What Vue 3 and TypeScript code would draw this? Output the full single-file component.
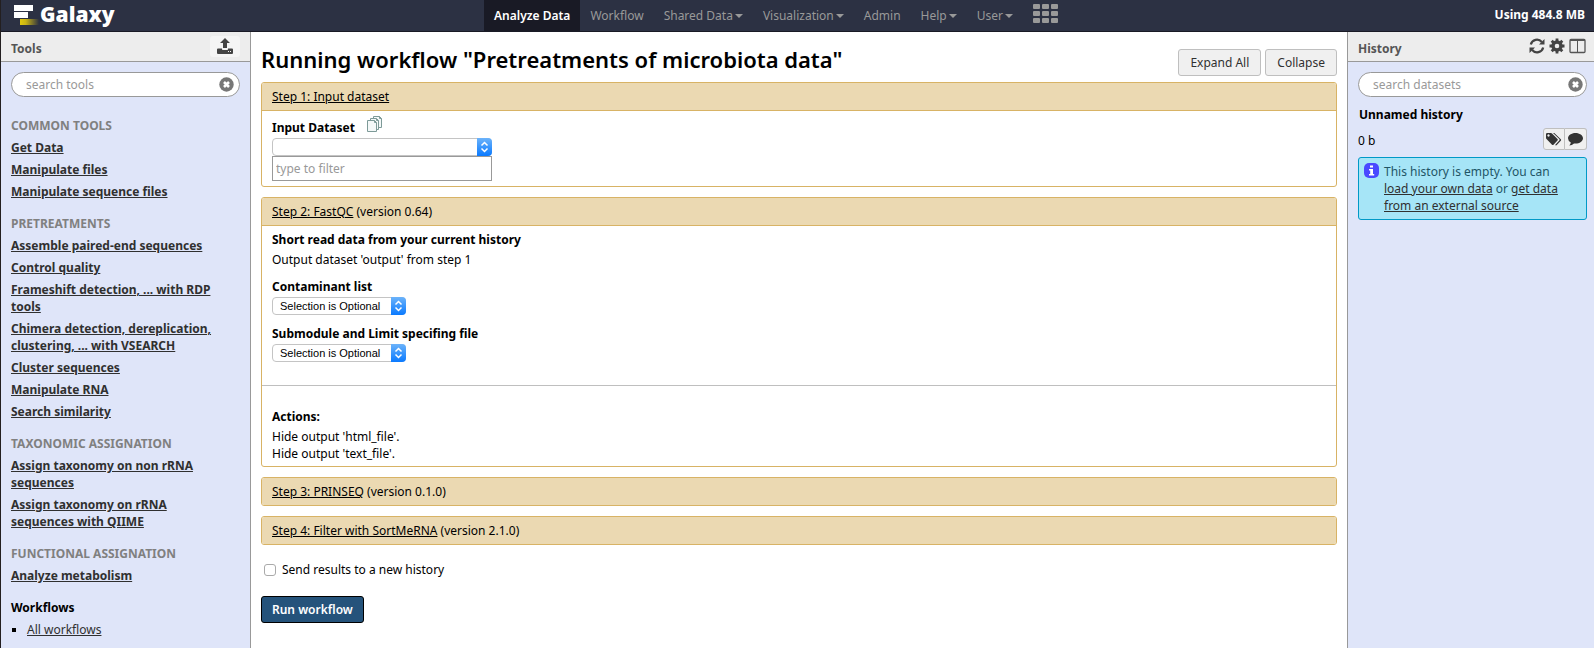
<script setup lang="ts">
import { ref } from 'vue'

interface NavItem {
  label: string
  menu?: boolean
  active?: boolean
}

interface ToolSection {
  title: string
  tools: string[]
}

const navItems: NavItem[] = [
  { label: 'Analyze Data', active: true },
  { label: 'Workflow' },
  { label: 'Shared Data', menu: true },
  { label: 'Visualization', menu: true },
  { label: 'Admin' },
  { label: 'Help', menu: true },
  { label: 'User', menu: true },
]

const sections: ToolSection[] = [
  { title: 'COMMON TOOLS', tools: ['Get Data', 'Manipulate files', 'Manipulate sequence files'] },
  {
    title: 'PRETREATMENTS',
    tools: [
      'Assemble paired-end sequences',
      'Control quality',
      'Frameshift detection, ... with RDP tools',
      'Chimera detection, dereplication, clustering, ... with VSEARCH',
      'Cluster sequences',
      'Manipulate RNA',
      'Search similarity',
    ],
  },
  {
    title: 'TAXONOMIC ASSIGNATION',
    tools: ['Assign taxonomy on non rRNA sequences', 'Assign taxonomy on rRNA sequences with QIIME'],
  },
  { title: 'FUNCTIONAL ASSIGNATION', tools: ['Analyze metabolism'] },
]

const optionalInputs = [
  { id: 'contaminants', label: 'Contaminant list' },
  { id: 'limits', label: 'Submodule and Limit specifing file' },
]

const toolQuery = ref('')
const datasetQuery = ref('')
const filter = ref('')
const newHistory = ref(false)
</script>

<template>
  <div class="app">
    <header class="masthead">
      <a class="brand" href="#">
        <svg width="26" height="21" viewBox="0 0 26 21" aria-hidden="true">
          <defs>
            <linearGradient id="tail" x1="0" x2="1" y1="0" y2="0">
              <stop offset="0" stop-color="#e0c80c" />
              <stop offset="0.3" stop-color="#c9b414" />
              <stop offset="1" stop-color="#2c3143" />
            </linearGradient>
          </defs>
          <rect x="0" y="1" width="19" height="6" fill="#fff" />
          <rect x="0" y="8" width="14" height="6" fill="#fff" />
          <rect x="6" y="15" width="19" height="6" fill="url(#tail)" />
        </svg>
        <span>Galaxy</span>
      </a>
      <nav class="nav">
        <a v-for="item in navItems" :key="item.label" href="#" :class="{ active: item.active }">
          {{ item.label }}<i v-if="item.menu" class="caret"></i>
        </a>
        <a class="grid-link" href="#" aria-label="Scratchbook">
          <svg width="25" height="20" viewBox="0 0 25 20" fill="#999" aria-hidden="true">
            <template v-for="row in 3" :key="row">
              <rect v-for="col in 3" :key="col" :x="(col - 1) * 9" :y="(row - 1) * 7" width="7" height="5" rx="1" />
            </template>
          </svg>
        </a>
      </nav>
      <div class="usage">Using 484.8 MB</div>
    </header>

    <div class="columns">
      <aside class="side tools">
        <div class="side-head">
          <h2>Tools</h2>
          <button class="upload" type="button" aria-label="Upload files">
            <svg width="16" height="16" viewBox="0 0 16 16" fill="#444" aria-hidden="true">
              <path d="M8 0l5 5H10v5H6V5H3z" />
              <path d="M1 10.500h4v.7q0 .8.800.8h4.400q.8 0 .8-.8v-.7h4q1 0 1 1V15q0 1-1 1H1q-1 0-1-1v-3.500q0-1 1-1zM11 13v1h1v-1zM13 13v1h1v-1z" fill-rule="evenodd" />
            </svg>
          </button>
        </div>
        <div class="side-body">
          <div class="search">
            <input v-model="toolQuery" type="text" placeholder="search tools" aria-label="search tools" />
            <button type="button" aria-label="Clear tool search" @click="toolQuery = ''">
              <svg width="15" height="15" viewBox="0 0 15 15" aria-hidden="true">
                <circle cx="7.500" cy="7.500" r="7.200" fill="#777" />
                <path d="M5 5l5 5M10 5l-5 5" stroke="#fff" stroke-width="2.600" />
              </svg>
            </button>
          </div>
          <section v-for="section in sections" :key="section.title" class="tool-section">
            <h3>{{ section.title }}</h3>
            <a v-for="tool in section.tools" :key="tool" href="#">{{ tool }}</a>
          </section>
          <section class="workflows">
            <h3>Workflows</h3>
            <ul>
              <li><a href="#">All workflows</a></li>
            </ul>
          </section>
        </div>
      </aside>

      <main class="center">
        <div class="title-row">
          <h1>Running workflow "Pretreatments of microbiota data"</h1>
          <div class="title-actions">
            <button class="btn" type="button">Expand All</button>
            <button class="btn" type="button">Collapse</button>
          </div>
        </div>

        <section class="step">
          <div class="step-head"><a href="#">Step 1: Input dataset</a></div>
          <div class="step-body input-step">
            <div class="dataset-label">
              <label for="dataset">Input Dataset</label>
              <svg width="16" height="16" viewBox="0 0 16 16" fill="#f4f8f8" stroke="#7d9a98" aria-hidden="true">
                <path d="M6.500.500h6l2 2v9h-8z" />
                <path d="M3.500 2.500h6l2 2v9h-8z" />
                <path d="M.500 4.500h7l2 2v9h-9z" />
                <path d="M7.500 4.500v2h2M9.500 2.500v2h2M12.500.500v2h2" fill="none" />
              </svg>
            </div>
            <div class="picker wide">
              <select id="dataset"><option></option></select>
              <svg width="15" height="18" viewBox="0 0 15 18" aria-hidden="true">
                <path d="M4.500 7.500l3-3 3 3M4.500 10.500l3 3 3-3" fill="none" stroke="#fff" stroke-width="1.500" />
              </svg>
            </div>
            <input v-model="filter" class="filter" type="text" placeholder="type to filter" aria-label="type to filter" />
          </div>
        </section>

        <section class="step">
          <div class="step-head"><a href="#">Step 2: FastQC</a> (version 0.64)</div>
          <div class="step-body">
            <div class="field">
              <b>Short read data from your current history</b>
              <p>Output dataset 'output' from step 1</p>
            </div>
            <div v-for="input in optionalInputs" :key="input.id" class="field">
              <label :for="input.id">{{ input.label }}</label>
              <div class="picker">
                <select :id="input.id"><option>Selection is Optional</option></select>
                <svg width="15" height="18" viewBox="0 0 15 18" aria-hidden="true">
                  <path d="M4.500 7.500l3-3 3 3M4.500 10.500l3 3 3-3" fill="none" stroke="#fff" stroke-width="1.500" />
                </svg>
              </div>
            </div>
          </div>
          <div class="actions">
            <b>Actions:</b>
            <div>Hide output 'html_file'.</div>
            <div>Hide output 'text_file'.</div>
          </div>
        </section>

        <section class="step">
          <div class="step-head"><a href="#">Step 3: PRINSEQ</a> (version 0.1.0)</div>
        </section>
        <section class="step">
          <div class="step-head"><a href="#">Step 4: Filter with SortMeRNA</a> (version 2.1.0)</div>
        </section>

        <label class="send"><input v-model="newHistory" type="checkbox" />Send results to a new history</label>
        <button class="run" type="button">Run workflow</button>
      </main>

      <aside class="side history">
        <div class="side-head">
          <h2>History</h2>
          <div class="head-icons">
            <button type="button" aria-label="Refresh history">
              <svg width="16" height="16" viewBox="0 0 16 16" aria-hidden="true">
                <path d="M1.800 6.500A6.300 6.300 0 0 1 12.800 4M14.200 9.500A6.300 6.300 0 0 1 3.200 12" fill="none" stroke="#444" stroke-width="2.200" />
                <path d="M15.500 1v5.500H10zM.500 15V9.500H6z" fill="#444" />
              </svg>
            </button>
            <button type="button" aria-label="History options">
              <svg width="16" height="16" viewBox="0 0 16 16" aria-hidden="true">
                <circle cx="8" cy="8" r="4" fill="none" stroke="#444" stroke-width="3.400" />
                <path d="M8 .500v3M8 12.500v3M.500 8h3M12.500 8h3M2.700 2.700l2 2M11.300 11.300l2 2M2.700 13.300l2-2M11.300 4.700l2-2" stroke="#444" stroke-width="2.800" />
              </svg>
            </button>
            <button type="button" aria-label="View all histories">
              <svg width="17" height="16" viewBox="0 0 17 16" fill="none" stroke="#555" aria-hidden="true">
                <rect x="1" y="1.500" width="15" height="13" rx="1" stroke-width="1.300" />
                <path d="M1 2h15" stroke-width="2" />
                <path d="M8.500 2v13" />
              </svg>
            </button>
          </div>
        </div>
        <div class="side-body">
          <div class="search">
            <input v-model="datasetQuery" type="text" placeholder="search datasets" aria-label="search datasets" />
            <button type="button" aria-label="Clear dataset search" @click="datasetQuery = ''">
              <svg width="15" height="15" viewBox="0 0 15 15" aria-hidden="true">
                <circle cx="7.500" cy="7.500" r="7.200" fill="#777" />
                <path d="M5 5l5 5M10 5l-5 5" stroke="#fff" stroke-width="2.600" />
              </svg>
            </button>
          </div>
          <h3 class="history-name">Unnamed history</h3>
          <div class="history-size">
            <span>0 b</span>
            <div class="pair">
              <button type="button" aria-label="Edit history tags">
                <svg width="16" height="13" viewBox="0 0 16 13" fill="#333" aria-hidden="true">
                  <path d="M0 1.200Q0 0 1.200 0H5l1 .5 5.500 5.500q.7.700 0 1.500l-4 4.200q-.7.700-1.500 0L.5 6Q0 5.500 0 4.500zM2.500 1.300a1.200 1.200 0 1 0 .01 0z" fill-rule="evenodd" />
                  <path d="M7 0h1.300l6.500 6.200q.8.800 0 1.500l-4 4.300q-.8.800-1.700 0l4.200-4.600q.6-.7 0-1.400z" />
                </svg>
              </button>
              <button type="button" aria-label="Edit history annotation">
                <svg width="15" height="13" viewBox="0 0 15 13" fill="#333" aria-hidden="true">
                  <path d="M7.500 0C11.600 0 15 2.300 15 5.200s-3.400 5.300-7.500 5.300l-1.500-.1Q4 12.300 1.300 12.500q1.400-1.300 1.500-3Q0 7.700 0 5.200C0 2.300 3.400 0 7.500 0z" />
                </svg>
              </button>
            </div>
          </div>
          <div class="info">
            <svg width="15" height="15" viewBox="0 0 15 15" aria-hidden="true">
              <rect width="15" height="15" rx="5" fill="#4a48ff" />
              <path d="M6 2.500h3v2H6zM5 6h4v5h1.200v1.500H5V11h1.200V7.500H5z" fill="#fff" />
            </svg>
            <p>This history is empty. You can <a href="#">load your own data</a> or <a href="#">get data from an external source</a></p>
          </div>
        </div>
      </aside>
    </div>
  </div>
</template>

<style>
body {
  margin: 0;
  background: #fff;
}
</style>

<style scoped>
* {
  box-sizing: border-box;
}

.app {
  display: flex;
  flex-direction: column;
  height: 100vh;
  overflow: hidden;
  border-left: 1px solid #231f20;
  color: #000;
  font-family: "Noto Sans", "Open Sans", sans-serif;
  font-size: 12px;
  line-height: 17px;
}

h1, h2, h3, p, ul {
  margin: 0;
}

button, input, select {
  font: inherit;
  margin: 0;
}

button {
  cursor: pointer;
}

svg {
  display: block;
  flex: none;
}

.masthead {
  display: flex;
  flex: none;
  height: 32px;
  background: #2c3143;
  border-bottom: 1px solid #191a25;
}

.brand {
  flex: 10 1 0;
  display: flex;
  align-items: center;
  padding: 0 0 3px 13px;
  color: #fff;
  font-family: "Open Sans", sans-serif;
  font-size: 21px;
  font-weight: 800;
  line-height: 28px;
  text-decoration: none;
}

.nav {
  display: flex;
}

.nav a {
  display: flex;
  align-items: center;
  padding: 0 10px 1px;
  color: #999;
  text-decoration: none;
}

.nav .active {
  background: #191a25;
  color: #fff;
  font-weight: 600;
}

.nav .grid-link {
  padding-bottom: 4px;
}

.caret {
  margin: 2px 0 0 2px;
  border: 4px solid transparent;
  border-top-color: #999;
  border-bottom: 0;
}

.usage {
  flex: 11 1 0;
  padding: 6px 9px 0 0;
  color: #fff;
  font-weight: 700;
  text-align: right;
}

.columns {
  display: flex;
  flex: 1;
  min-height: 0;
}

.side {
  flex: none;
  background: #dfe5f9;
}

.tools {
  width: 250px;
  border-right: 1px solid #999;
}

.history {
  width: 247px;
  border-left: 1px solid #999;
}

.side-head {
  display: flex;
  align-items: center;
  justify-content: space-between;
  height: 30px;
  padding: 0 10px;
  background: #ededed;
  border-bottom: 1px solid #999;
}

.history .side-head {
  padding-right: 8px;
}

.side-head h2 {
  padding-top: 4px;
  color: #555;
  font-size: 12px;
  font-weight: 700;
  line-height: 17px;
}

.upload {
  display: flex;
  justify-content: center;
  width: 30px;
  height: 21px;
  padding: 2px 0;
  background: #f5f5f5;
  border: 0;
  border-radius: 3px;
}

.head-icons {
  display: flex;
  gap: 4px;
  padding-bottom: 2px;
}

.head-icons button {
  padding: 0;
  background: none;
  border: 0;
}

.side-body {
  padding: 10px;
}

.history .side-body {
  padding-right: 7px;
}

.search {
  display: flex;
  align-items: center;
  height: 25px;
  padding: 0 5px 0 14px;
  background: #fff;
  border: 1px solid #999;
  border-radius: 13px;
}

.history .search {
  padding-right: 3px;
}

.search input {
  flex: 1;
  min-width: 0;
  padding: 0;
  background: none;
  border: 0;
  outline: 0;
}

.search button {
  padding: 0;
  background: none;
  border: 0;
}

input::placeholder {
  color: #999;
  opacity: 1;
}

.tool-section {
  display: flex;
  flex-direction: column;
  align-items: flex-start;
  gap: 5px;
  padding: 0 15px 15px 0;
}

.search + .tool-section {
  padding-top: 20px;
}

.tool-section h3 {
  color: #808080;
  font-size: 12px;
  font-weight: 700;
  line-height: 17px;
}

.tool-section a {
  color: #303030;
  font-weight: 700;
}

.workflows h3 {
  font-size: 12px;
  line-height: 17px;
}

.workflows ul {
  padding: 5px 0 0 16px;
  list-style: square;
}

.workflows a {
  color: #303030;
}

.center {
  flex: 1;
  min-width: 0;
  padding: 17px 10px 0;
}

.title-row {
  display: flex;
  justify-content: space-between;
  height: 33px;
}

.title-row h1 {
  font-size: 22px;
  font-weight: 600;
  line-height: 20px;
}

.title-actions {
  display: flex;
  gap: 4px;
}

.btn {
  height: 27px;
  padding: 0 11px;
  background: #f0f0f0;
  border: 1px solid #bfbfbf;
  border-radius: 3px;
  color: #303030;
}

.step {
  margin-bottom: 10px;
  border: 1px solid #d8b365;
  border-radius: 3px;
}

.step-head {
  padding: 5px 10px;
  background: #ebd9b2;
  border-radius: 2px;
}

.step-head a {
  color: #000;
}

.step-head:not(:last-child) {
  border-bottom: 1px solid #d8b365;
  border-radius: 2px 2px 0 0;
}

.step-body {
  padding: 5px 10px 13px;
}

.input-step {
  padding-bottom: 5px;
}

.step label, .step b {
  font-weight: 700;
}

.dataset-label {
  display: flex;
  gap: 12px;
  align-items: flex-start;
  height: 22px;
}

.dataset-label label {
  padding-top: 3px;
}

.field {
  display: flex;
  flex-direction: column;
  align-items: flex-start;
  gap: 2px;
  padding-bottom: 10px;
}

.field p {
  padding-top: 1px;
}

.picker {
  display: grid;
  grid-template-areas: "box";
  align-items: center;
  width: 134px;
}

.picker.wide {
  width: 220px;
}

.picker select {
  grid-area: box;
  width: 100%;
  height: 18px;
  padding: 0 20px 0 7px;
  appearance: none;
  background: #fff;
  border: 1px solid #c4c4c4;
  border-radius: 4px;
  color: #000;
  font-family: "Liberation Sans", Arial, sans-serif;
  font-size: 11px;
  line-height: 14px;
}

.picker svg {
  grid-area: box;
  justify-self: end;
  background: linear-gradient(#6cb3fa, #0a7aff);
  border-radius: 0 4px 4px 0;
  pointer-events: none;
}

.filter {
  display: block;
  width: 220px;
  height: 25px;
  padding: 0 3px;
  background: #fff;
  border: 1px solid #999;
}

.actions {
  padding: 22px 10px 4px;
  border-top: 1px solid #bfbfbf;
}

.actions b {
  display: block;
  padding-bottom: 3px;
}

.send {
  display: flex;
  align-items: center;
  gap: 6px;
  margin: 16px 0 18px;
  padding-left: 3px;
}

.send input {
  width: 12px;
  height: 12px;
  appearance: none;
  background: #fff;
  border: 1px solid #aaa;
  border-radius: 3px;
}

.send input:checked {
  background: #0a7aff;
}

.run {
  height: 27px;
  padding: 0 10px;
  background: #25537b;
  border: 1px solid #000;
  border-radius: 3px;
  color: #fff;
  font-weight: 600;
}

.history-name {
  padding: 9px 1px 0;
  font-size: 12px;
  line-height: 17px;
}

.history-size {
  display: flex;
  align-items: center;
  justify-content: space-between;
  padding: 5px 0 7px;
}

.history-size span {
  padding-top: 2px;
}

.pair {
  display: flex;
}

.pair button {
  display: flex;
  align-items: center;
  justify-content: center;
  width: 22px;
  height: 22px;
  padding: 0;
  background: #f0f0f0;
  border: 1px solid #bfbfbf;
  border-radius: 3px 0 0 3px;
}

.pair button + button {
  border-left: 0;
  border-radius: 0 3px 3px 0;
}

.info {
  display: flex;
  gap: 5px;
  padding: 5px 20px 5px 5px;
  background: #a6e5f7;
  border: 1px solid #0099c7;
  border-radius: 3px;
  color: #1f5566;
}

.info a {
  color: #303030;
}
</style>
